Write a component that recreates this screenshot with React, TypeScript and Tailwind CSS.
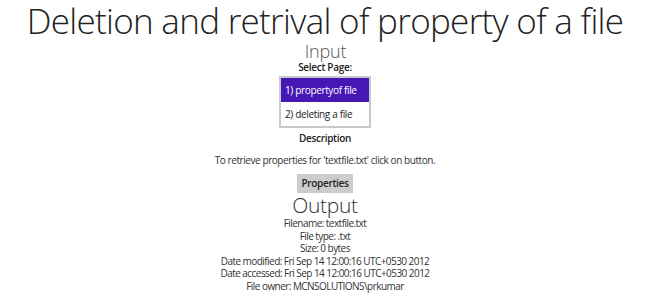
import { useState } from "react";

const pages = ["1) propertyof file", "2) deleting a file"];

const outputLines = [
  "Filename: textfile.txt",
  "File type: .txt",
  "Size: 0 bytes",
  "Date modified: Fri Sep 14 12:00:16 UTC+0530 2012",
  "Date accessed: Fri Sep 14 12:00:16 UTC+0530 2012",
  "File owner: MCNSOLUTIONS\\prkumar",
];

export default function App() {
  const [selected, setSelected] = useState(0);

  return (
    <div
      className="w-[650px] h-[308px] bg-white text-[#222] flex flex-col items-center overflow-hidden antialiased"
      style={{ fontFamily: '"Open Sans", "Noto Sans", sans-serif' }}
    >
      <h1 className="text-[35px] font-light leading-[42px] tracking-[-0.7px]">
        Deletion and retrival of property of a file
      </h1>
      <div className="-mt-[1px] text-[18px] font-light leading-[20px] text-[#555] tracking-[-0.2px] pl-[1px]">
        Input
      </div>
      <div className="text-[10px] font-semibold leading-[12px] tracking-[-0.3px]">Select Page:</div>
      <div className="mt-[3px] w-[92px] border-2 border-[#c9c9c9] flex flex-col tracking-[-0.35px]">
        {pages.map((p, i) => (
          <button
            key={p}
            onClick={() => setSelected(i)}
            className={
              i === selected
                ? "h-[24px] px-[4px] text-left text-[10px] bg-[#4617b4] text-white"
                : "h-[24px] px-[4px] text-left text-[10px] bg-white text-[#222]"
            }
          >
            {p}
          </button>
        ))}
      </div>
      <div className="mt-[3px] text-[10px] font-semibold leading-[14px] tracking-[-0.3px]">Description</div>
      <p className="mt-[8px] text-[10px] leading-[14px] text-[#333] tracking-[-0.43px]">
        To retrieve properties for 'textfile.txt' click on button.
      </p>
      <button className="mt-[7px] h-[19px] w-[56px] bg-[#cdcdcd] text-[10px] font-semibold tracking-[-0.3px]">
        Properties
      </button>
      <div className="mt-[1px] text-[21px] font-light leading-[22px] text-[#333] tracking-[-0.3px]">
        Output
      </div>
      <div className="mt-[1px] flex flex-col items-center text-[10px] leading-[12.6px] text-[#333] tracking-[-0.55px]">
        {outputLines.map((l) => (
          <div key={l}>{l}</div>
        ))}
      </div>
    </div>
  );
}
